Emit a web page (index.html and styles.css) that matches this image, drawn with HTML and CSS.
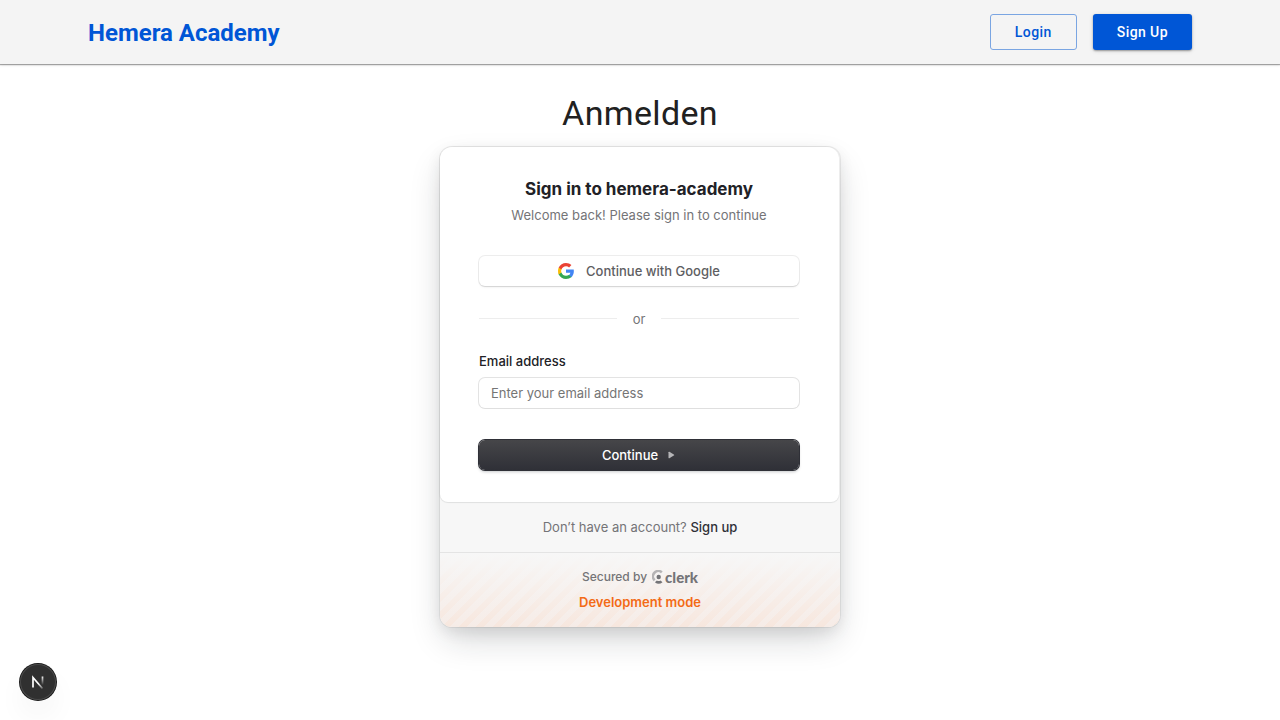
FILE: index.html
```html
<!DOCTYPE html>
<html lang="de">
<head>
<meta charset="utf-8">
<meta name="viewport" content="width=device-width, initial-scale=1">
<title>Hemera Academy – Anmelden</title>
<link rel="stylesheet" href="styles.css">
</head>
<body>
<header class="site-header">
  <div class="site-header-inner">
    <a class="brand" href="#">Hemera Academy</a>
    <nav class="header-actions">
      <button class="btn btn-outlined" type="button">Login</button>
      <button class="btn btn-filled" type="button">Sign Up</button>
    </nav>
  </div>
</header>
<main class="page">
  <h1 class="page-title">Anmelden</h1>
  <section class="auth-card">
    <div class="auth-body">
      <div class="auth-heading">
        <h2 class="auth-title">Sign in to hemera-academy</h2>
        <p class="auth-subtitle">Welcome back! Please sign in to continue</p>
      </div>
      <button class="social-button" type="button">
        <svg class="google-icon" viewBox="0 0 48 48" aria-hidden="true">
          <path fill="#4285F4" d="M47.5 24.5c0-1.600-.14-3.200-.43-4.700H24v9.300h13.200c-.57 3-2.300 5.600-4.900 7.300v6h7.900c4.600-4.300 7.300-10.500 7.300-17.900z"/>
          <path fill="#34A853" d="M24 48c6.600 0 12.200-2.200 16.200-5.900l-7.900-6.100c-2.200 1.500-5 2.400-8.300 2.400-6.400 0-11.800-4.300-13.700-10.100H2.100v6.300C6.100 42.600 14.400 48 24 48z"/>
          <path fill="#FBBC05" d="M10.300 28.300c-.5-1.400-.8-2.900-.8-4.300s.3-2.900.8-4.300v-6.300H2.100C.8 16.600 0 20.200 0 24s.8 7.400 2.100 10.600z"/>
          <path fill="#EA4335" d="M24 9.500c3.600 0 6.800 1.200 9.300 3.700l7-7C36.100 2.300 30.600 0 24 0 14.400 0 6.100 5.400 2.100 13.400l8.200 6.300C12.200 13.900 17.600 9.500 24 9.500z"/>
        </svg>
        <span>Continue with Google</span>
      </button>
      <div class="divider"><span>or</span></div>
      <form class="auth-form">
        <div class="field">
          <label for="email">Email address</label>
          <input id="email" type="email" placeholder="Enter your email address">
        </div>
        <button class="submit-button" type="submit">
          <span>Continue</span>
          <svg class="arrow-icon" viewBox="0 0 10 10" aria-hidden="true"><path d="M2.500 2.300v5.400c0 .5.500.7.900.5l4.400-2.600c.5-.3.500-.9 0-1.200L3.400 1.800c-.4-.2-.9 0-.9.500z" fill="currentColor"/></svg>
        </button>
      </form>
    </div>
    <footer class="auth-footer">
      <p class="signup-row">Don’t have an account? <a href="#">Sign up</a></p>
      <div class="dev-row">
        <p class="secured"><span>Secured by</span>
          <a class="clerk" href="#">
            <svg viewBox="0 0 12 14" aria-hidden="true">
              <path d="M9.800 2.400A5.300 5.300 0 0 0 2.700 10.300" fill="none" stroke="currentColor" stroke-width="2.600" opacity=".5"/>
              <path d="M2.900 12.300 4.900 10.400Q6.700 11.400 8.500 10.400L10.500 12.300Q6.700 15.300 2.900 12.300Z" fill="currentColor"/>
              <circle cx="6.700" cy="7" r="2.200" fill="currentColor"/>
            </svg>
            <span>clerk</span>
          </a>
        </p>
        <p class="dev-mode">Development mode</p>
      </div>
    </footer>
  </section>
</main>
<button class="dev-badge" type="button" aria-label="Open Next.js Dev Tools">
  <svg viewBox="0 0 36 36" aria-hidden="true">
    <defs>
      <linearGradient id="fade-diagonal" gradientUnits="userSpaceOnUse" x1="19" y1="19" x2="24" y2="25"><stop stop-color="#fff"/><stop offset="1" stop-color="#fff" stop-opacity=".1"/></linearGradient>
      <linearGradient id="fade-stem" gradientUnits="userSpaceOnUse" x1="0" y1="12" x2="0" y2="21"><stop stop-color="#fff"/><stop offset="1" stop-color="#fff" stop-opacity="0"/></linearGradient>
    </defs>
    <path d="M13 23.500V13.500L22.500 24.500" fill="none" stroke="url(#fade-diagonal)" stroke-width="1.700"/>
    <path d="M22.500 12.500V22" stroke="url(#fade-stem)" stroke-width="1.700"/>
  </svg>
</button>
</body>
</html>
```
FILE: styles.css
```css
* { box-sizing: border-box; }

body {
  min-height: 100vh;
  margin: 0;
  background: #fff;
  color: #212126;
  font-family: Inter, "Liberation Sans", sans-serif;
  font-size: 13px;
  line-height: 18px;
}

h1, h2, p { margin: 0; }
a { color: inherit; text-decoration: none; }
button, input { font: inherit; }
button { cursor: pointer; }

.site-header {
  background: #f4f4f4;
  box-shadow: 0 1px 1px rgba(0, 0, 0, 0.32), 0 1px 3px rgba(0, 0, 0, 0.12);
  font-family: Roboto, "Liberation Sans", sans-serif;
}

.site-header-inner {
  display: flex;
  align-items: center;
  justify-content: space-between;
  max-width: 1152px;
  min-height: 64px;
  margin: 0 auto;
  padding: 0 24px;
}

.brand {
  padding-top: 2px;
  color: #0056d6;
  font-size: 24px;
  font-weight: 700;
  line-height: 32px;
}

.header-actions { display: flex; gap: 16px; }

.btn {
  padding: 6px 24px;
  border: 0;
  border-radius: 3px;
  font-size: 14px;
  font-weight: 500;
  line-height: 24px;
  letter-spacing: 0.03em;
}

.btn-outlined {
  padding: 5px 24px;
  border: 1px solid #7aa5e2;
  background: transparent;
  color: #0056d6;
}

.btn-filled {
  background: #0056d6;
  color: #fff;
  box-shadow: 0 1px 2px rgba(0, 0, 0, 0.35), 0 1px 5px rgba(0, 0, 0, 0.1);
}

.page {
  display: flex;
  flex-direction: column;
  align-items: center;
  gap: 12px;
  padding: 28px 16px 80px;
}

.page-title {
  font-family: Roboto, "Liberation Sans", sans-serif;
  font-size: 34px;
  font-weight: 400;
  line-height: 43px;
  letter-spacing: 0.01em;
  color: #212121;
}

.auth-card {
  width: 100%;
  max-width: 400px;
  border-radius: 12px;
  background: #f7f7f7;
  box-shadow:
    0 0 0 1px rgba(0, 0, 0, 0.06),
    0 5px 15px rgba(0, 0, 0, 0.08),
    0 15px 35px -5px rgba(25, 28, 33, 0.2);
}

.auth-body {
  display: flex;
  flex-direction: column;
  gap: 24px;
  margin-right: 1px;
  padding: 30px 40px 32px 39px;
  border-radius: 12px 12px 8px 8px;
  background: #fff;
  box-shadow: 0 0 1px 1px rgba(0, 0, 0, 0.04), 0 1px 1px rgba(25, 28, 33, 0.06);
}

.auth-heading {
  display: flex;
  flex-direction: column;
  gap: 5px;
  margin-bottom: 8px;
  text-align: center;
}

.auth-title {
  font-size: 17px;
  font-weight: 700;
  line-height: 24px;
}

.auth-subtitle { color: #747477; }

.social-button,
.submit-button {
  display: flex;
  align-items: center;
  justify-content: center;
  width: 100%;
  padding: 6px 12px;
  border: 0;
  border-radius: 6px;
  font-weight: 500;
}

.social-button {
  gap: 12px;
  background: #fff;
  color: #5e5e62;
  box-shadow: 0 0 0 1px rgba(0, 0, 0, 0.07), 0 1px 1px rgba(0, 0, 0, 0.05), 0 2px 3px -1px rgba(0, 0, 0, 0.08);
}

.google-icon { width: 16px; height: 16px; }

.divider {
  display: flex;
  align-items: center;
  gap: 16px;
  color: #747477;
}

.divider::before,
.divider::after {
  content: "";
  flex: 1;
  height: 2px;
  border-top: 1px solid #ededed;
}

.auth-form,
.field {
  display: flex;
  flex-direction: column;
}

.auth-form { gap: 32px; }
.field { gap: 8px; }
.field label { font-weight: 500; }

.field input {
  width: 100%;
  height: 30px;
  padding: 6px 12px;
  border: 0;
  border-radius: 6px;
  background: #fff;
  color: #212126;
  box-shadow: 0 0 0 1px rgba(0, 0, 0, 0.11), 0 1px 1px rgba(0, 0, 0, 0.02);
}

.field input::placeholder { color: #757575; opacity: 1; }

.submit-button {
  gap: 8px;
  background: linear-gradient(#464649, #2f3037);
  color: #fff;
  box-shadow: 0 0 0 1px #2f3037, 0 2px 3px rgba(34, 42, 53, 0.25);
}

.arrow-icon { width: 10px; height: 10px; color: #b5b5b7; }

.signup-row {
  padding: 16px;
  color: #747477;
  text-align: center;
}

.signup-row a { color: #2f3037; font-weight: 500; }

.dev-row {
  display: flex;
  flex-direction: column;
  align-items: center;
  gap: 8px;
  padding: 16px;
  border-top: 1px solid #e4e4e4;
  border-radius: 0 0 12px 12px;
  background:
    linear-gradient(#f7f7f7, rgba(247, 247, 247, 0)),
    repeating-linear-gradient(-45deg, #f7e7de 0 6px, #f6ece7 6px 12px);
}

.secured {
  display: flex;
  align-items: center;
  gap: 5px;
  color: #747477;
  font-size: 12px;
  font-weight: 500;
  line-height: 16px;
}

.clerk {
  display: flex;
  align-items: center;
  gap: 1px;
  font-family: Lato, "Liberation Sans", sans-serif;
  font-size: 15px;
  font-weight: 900;
}

.clerk svg { width: 12px; height: 14px; }

.dev-mode { color: #f36b16; font-weight: 600; }

.dev-badge {
  position: fixed;
  bottom: 20px;
  left: 20px;
  width: 36px;
  height: 36px;
  padding: 0;
  border: 0;
  border-radius: 50%;
  background: #303030;
  box-shadow: 0 0 0 1px #171717, inset 0 0 0 1px #4a4a4a, 0 16px 32px -8px rgba(0, 0, 0, 0.14);
}

.dev-badge svg { display: block; width: 36px; height: 36px; }
```
